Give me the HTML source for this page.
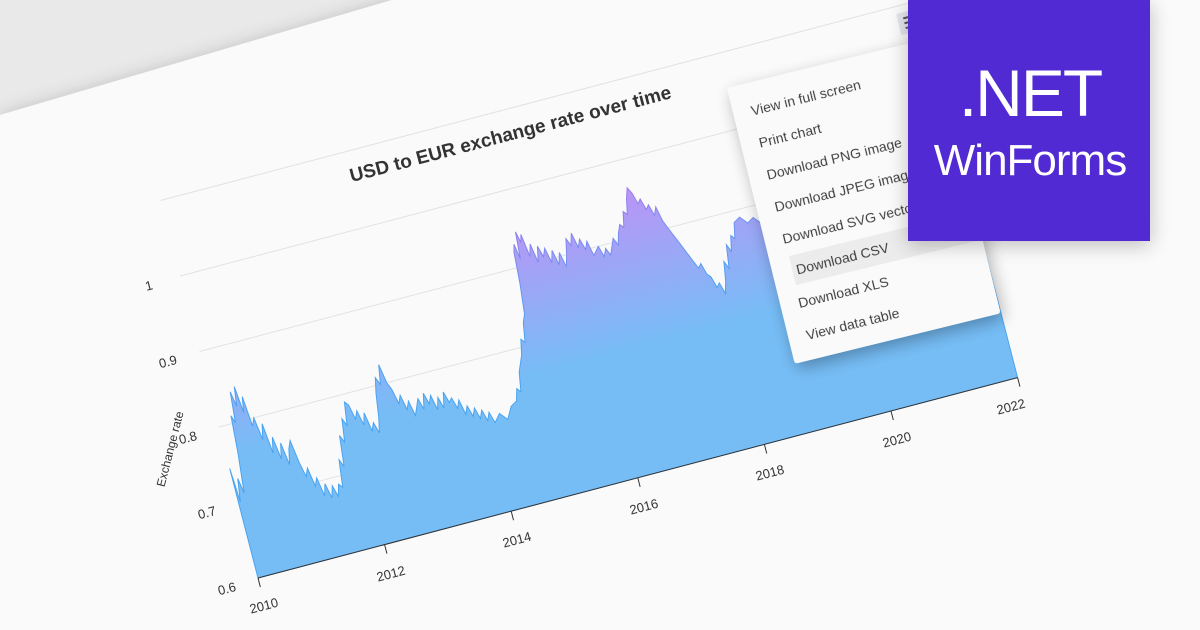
<!DOCTYPE html>
<html><head><meta charset="utf-8"><style>
html,body{margin:0;padding:0;width:1200px;height:630px;overflow:hidden;background:#e9e9e9;font-family:"Liberation Sans","DejaVu Sans",sans-serif}
svg{display:block}
</style></head><body>
<svg width="1200" height="630" viewBox="0 0 1200 630" xmlns="http://www.w3.org/2000/svg">
<defs>
<filter id="sh" x="-20%" y="-20%" width="140%" height="140%"><feGaussianBlur in="SourceAlpha" stdDeviation="10"/><feOffset dx="0" dy="4"/><feComponentTransfer><feFuncA type="linear" slope="0.25"/></feComponentTransfer><feMerge><feMergeNode/><feMergeNode in="SourceGraphic"/></feMerge></filter>
<filter id="sh2" x="-20%" y="-20%" width="140%" height="140%"><feGaussianBlur in="SourceAlpha" stdDeviation="8"/><feOffset dx="2" dy="6"/><feComponentTransfer><feFuncA type="linear" slope="0.3"/></feComponentTransfer><feMerge><feMergeNode/><feMergeNode in="SourceGraphic"/></feMerge></filter>
<linearGradient id="ag" gradientUnits="userSpaceOnUse" x1="0" y1="4" x2="0" y2="1.6">
<stop offset="0" stop-color="#c88cf5"/><stop offset="1" stop-color="#76bdf6"/></linearGradient>
<linearGradient id="lg" gradientUnits="userSpaceOnUse" x1="0" y1="4" x2="0" y2="2.2">
<stop offset="0" stop-color="#b070f0"/><stop offset="1" stop-color="#4aa3f0"/></linearGradient>
</defs>
<polygon points="0,115 392,0 1200,0 1200,630 0,630" fill="#fafafa" filter="url(#sh)"/>
<g transform="matrix(63.3,-16.7,-19.5,-75.5,258,578)">
  <g stroke="#e2e2e2" fill="none">
    <line x1="0" y1="1" x2="12" y2="1" vector-effect="non-scaling-stroke"/>
    <line x1="0" y1="2" x2="12" y2="2" vector-effect="non-scaling-stroke"/>
    <line x1="0" y1="3" x2="12" y2="3" vector-effect="non-scaling-stroke"/>
    <line x1="0" y1="4" x2="12" y2="4" vector-effect="non-scaling-stroke"/>
    <line x1="0" y1="5" x2="12" y2="5" vector-effect="non-scaling-stroke"/>
  </g>
  <path id="d" fill="url(#ag)" stroke="url(#lg)" stroke-width="1" vector-effect="non-scaling-stroke" d="M0,1.45L0.03,1.0L0.08,1.3L0.12,1.1L0.18,1.6L0.22,2.1L0.26,2.0L0.3,2.4L0.34,2.2L0.38,2.45L0.42,2.1L0.46,2.3L0.5,1.9L0.55,2.0L0.6,1.7L0.65,1.9L0.7,1.5L0.75,1.7L0.8,1.4L0.85,1.6L0.9,1.3L0.95,1.5L1.0,1.6L1.05,1.3L1.1,1.1L1.15,1.2L1.2,0.95L1.25,1.05L1.3,0.8L1.35,0.95L1.4,0.75L1.45,0.9L1.5,0.75L1.55,0.9L1.6,0.85L1.65,1.2L1.7,1.1L1.75,1.5L1.8,1.4L1.85,1.7L1.9,1.6L1.95,1.9L2.0,1.85L2.05,1.65L2.1,1.75L2.15,1.55L2.2,1.7L2.25,1.45L2.3,1.55L2.35,1.4L2.4,1.6L2.45,1.9L2.5,2.1L2.55,2.0L2.6,2.25L2.65,2.0L2.7,1.9L2.75,1.7L2.8,1.8L2.85,1.6L2.9,1.7L2.95,1.5L3.0,1.6L3.05,1.7L3.1,1.55L3.15,1.75L3.2,1.6L3.25,1.7L3.3,1.5L3.35,1.65L3.4,1.5L3.45,1.7L3.5,1.55L3.55,1.6L3.6,1.45L3.65,1.55L3.7,1.35L3.75,1.45L3.8,1.3L3.85,1.4L3.9,1.25L3.95,1.35L4.0,1.2L4.05,1.3L4.1,1.15L4.2,1.25L4.3,1.15L4.4,1.3L4.5,1.35L4.55,1.5L4.6,1.45L4.65,1.7L4.7,1.8L4.75,1.9L4.8,2.1L4.85,2.05L4.9,2.3L4.95,2.4L5.0,2.8L5.03,3.2L5.06,3.3L5.1,3.1L5.13,3.45L5.17,3.3L5.2,3.4L5.25,3.1L5.3,3.25L5.35,3.0L5.4,3.2L5.45,3.05L5.5,3.15L5.55,2.95L5.6,3.1L5.65,2.9L5.7,3.05L5.75,2.85L5.8,3.0L5.85,3.2L5.9,3.1L5.95,3.25L6.0,3.05L6.05,3.15L6.1,3.0L6.15,3.1L6.2,2.9L6.3,3.0L6.35,2.85L6.4,2.95L6.45,2.85L6.5,2.95L6.55,3.05L6.6,2.95L6.65,3.1L6.7,3.2L6.75,3.15L6.8,3.35L6.85,3.3L6.9,3.5L6.95,3.63L7.0,3.55L7.05,3.4L7.1,3.45L7.15,3.3L7.2,3.35L7.25,3.2L7.3,3.3L7.35,3.1L7.4,3.0L7.45,2.9L7.5,2.8L7.55,2.7L7.6,2.6L7.65,2.5L7.7,2.4L7.75,2.45L7.8,2.3L7.85,2.25L7.9,2.1L7.95,2.15L8.0,2.0L8.05,2.15L8.1,2.4L8.15,2.3L8.2,2.6L8.25,2.5L8.3,2.7L8.35,2.65L8.4,2.85L8.5,2.9L8.6,2.8L8.7,2.85L8.8,2.75L8.9,2.8L9.0,2.75L9.1,2.85L9.2,2.8L9.3,2.9L9.4,2.85L9.5,2.9L9.6,2.95L9.7,3.0L9.8,3.1L9.9,3.05L10.0,3.05L10.1,3.15L10.2,3.1L10.3,3.0L10.4,2.9L10.5,2.7L10.6,2.6L10.7,2.4L10.8,2.3L10.9,2.25L11.0,2.2L11.1,2.3L11.2,2.25L11.3,2.35L11.4,2.4L11.5,2.5L11.6,2.55L11.7,2.7L11.8,2.8L11.9,2.85L12.0,2.9L12,0L0,0Z"/>
  <line x1="0" y1="0" x2="12" y2="0" stroke="#333" vector-effect="non-scaling-stroke"/>
  <g stroke="#333">
    <line x1="0" y1="0" x2="0" y2="-0.12" vector-effect="non-scaling-stroke"/><line x1="2" y1="0" x2="2" y2="-0.12" vector-effect="non-scaling-stroke"/><line x1="4" y1="0" x2="4" y2="-0.12" vector-effect="non-scaling-stroke"/><line x1="6" y1="0" x2="6" y2="-0.12" vector-effect="non-scaling-stroke"/><line x1="8" y1="0" x2="8" y2="-0.12" vector-effect="non-scaling-stroke"/><line x1="10" y1="0" x2="10" y2="-0.12" vector-effect="non-scaling-stroke"/><line x1="12" y1="0" x2="12" y2="-0.12" vector-effect="non-scaling-stroke"/>
  </g>
</g>
<g font-size="13" fill="#333" text-anchor="middle">
  <text transform="translate(265,610) rotate(-14.7)">2010</text>
  <text transform="translate(392,578) rotate(-14.7)">2012</text>
  <text transform="translate(518,544) rotate(-14.7)">2014</text>
  <text transform="translate(645,511) rotate(-14.7)">2016</text>
  <text transform="translate(771,477) rotate(-14.7)">2018</text>
  <text transform="translate(898,444) rotate(-14.7)">2020</text>
  <text transform="translate(1012,411) rotate(-14.7)">2022</text>
  <text transform="translate(228,593) rotate(-14.7)">0.6</text>
  <text transform="translate(208,517) rotate(-14.7)">0.7</text>
  <text transform="translate(189,442) rotate(-14.7)">0.8</text>
  <text transform="translate(169,366) rotate(-14.7)">0.9</text>
  <text transform="translate(150,290) rotate(-14.7)">1</text>
  <text transform="translate(174,450) rotate(-75.5)" font-size="12">Exchange rate</text>
  <text transform="translate(512,140) rotate(-14.7)" font-size="19" font-weight="bold">USD to EUR exchange rate over time</text>
</g>
<g transform="translate(896,14) rotate(-14)">
  <rect x="0" y="0" width="24" height="22" rx="2" fill="#e4e4ee"/>
  <g stroke="#555" stroke-width="2"><line x1="6" y1="6" x2="18" y2="6"/><line x1="6" y1="11" x2="18" y2="11"/><line x1="6" y1="16" x2="18" y2="16"/></g>
</g>
<g transform="translate(727,88) rotate(-13.8)" filter="url(#sh2)">
  <rect x="0" y="0" width="212" height="284" rx="3" fill="#fafafa"/>
  <rect x="20" y="178" width="192" height="30" fill="#ececec"/>
  <g font-size="14" fill="#333">
    <text x="18" y="33">View in full screen</text>
    <text x="18" y="66">Print chart</text>
    <text x="18" y="99">Download PNG image</text>
    <text x="18" y="132">Download JPEG image</text>
    <text x="18" y="165">Download SVG vector image</text>
    <text x="24" y="198">Download CSV</text>
    <text x="18" y="231">Download XLS</text>
    <text x="18" y="264">View data table</text>
  </g>
</g>
<g filter="url(#sh)">
  <rect x="908" y="0" width="242" height="241" fill="#512bd4"/>
</g>
<text x="1030" y="116" font-size="66" fill="#fff" text-anchor="middle" letter-spacing="-2">.NET</text>
<text x="1030" y="175" font-size="44" fill="#fff" text-anchor="middle" letter-spacing="-1">WinForms</text>
</svg>
</body></html>
